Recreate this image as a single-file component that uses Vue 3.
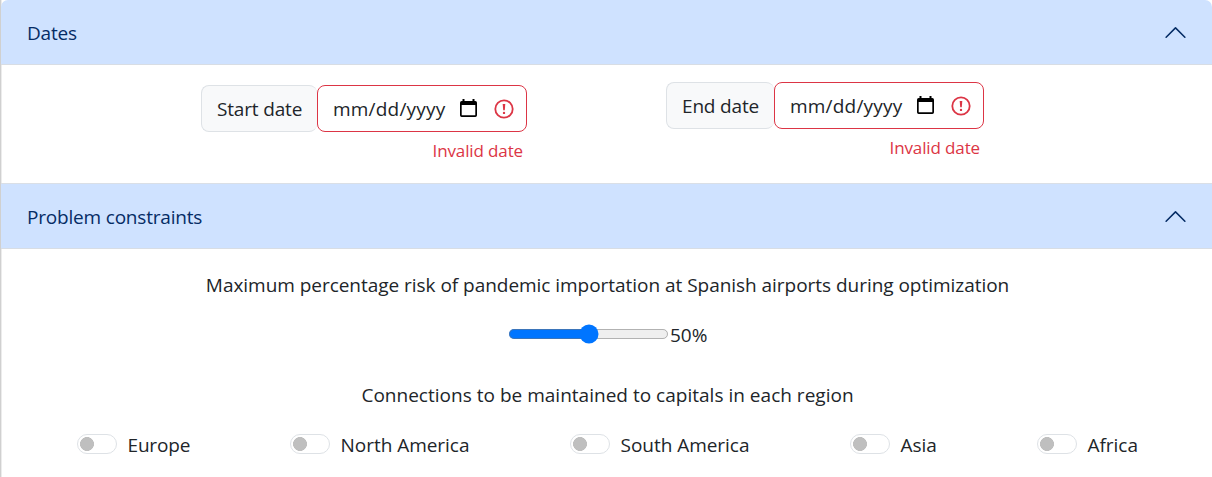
<script setup>
import { ref } from 'vue'

const risk = ref(50)
const dates = [
  { label: 'Start date', key: 'start' },
  { label: 'End date', key: 'end' },
]
const regions = [
  { name: 'Europe', key: 'europe' },
  { name: 'North America', key: 'north' },
  { name: 'South America', key: 'south' },
  { name: 'Asia', key: 'asia' },
  { name: 'Africa', key: 'africa' },
]
</script>

<template>
  <main class="accordion">
    <section>
      <header class="bar first">
        <span class="title-dates">Dates</span>
        <svg class="chevron" viewBox="0 0 16 16"><path d="M1.646 4.646a.5.5 0 0 1 .708 0L8 10.293l5.646-5.647a.5.5 0 0 1 .708.708l-6 6a.5.5 0 0 1-.708 0l-6-6a.5.5 0 0 1 0-.708z" /></svg>
      </header>
      <div class="dates">
        <div v-for="d in dates" :key="d.key" class="field" :class="d.key">
          <div class="group">
            <div class="label"><span>{{ d.label }}</span></div>
            <div class="control">
              <span class="mask">mm/dd/yyyy</span>
              <svg class="calendar" viewBox="0 0 17 19"><path fill-rule="evenodd" d="M2.500 0h2v2h8V0h2v2h.8A1.700 1.700 0 0 1 17 3.700v12.600a1.700 1.700 0 0 1-1.700 1.700H1.700A1.700 1.700 0 0 1 0 16.300V3.700A1.700 1.700 0 0 1 1.700 2h.8zM1.700 6v10.300h13.600V6z" /></svg>
              <svg class="alert" viewBox="0 0 20 20"><circle cx="10" cy="10" r="8.700" /><path d="M8.700 5h2.600l-.5 6.300H9.200z" /><circle class="dot" cx="10" cy="13.900" r="1.200" /></svg>
            </div>
          </div>
          <div class="error"><span>Invalid date</span></div>
        </div>
      </div>
    </section>
    <section>
      <header class="bar">
        <span class="title-problem">Problem constraints</span>
        <svg class="chevron" viewBox="0 0 16 16"><path d="M1.646 4.646a.5.5 0 0 1 .708 0L8 10.293l5.646-5.647a.5.5 0 0 1 .708.708l-6 6a.5.5 0 0 1-.708 0l-6-6a.5.5 0 0 1 0-.708z" /></svg>
      </header>
      <div class="constraints">
        <p class="risk-title">Maximum percentage risk of pandemic importation at Spanish airports during optimization</p>
        <div class="slider">
          <input v-model="risk" type="range" min="0" max="100" />
          <span>{{ risk }}%</span>
        </div>
        <p class="region-title">Connections to be maintained to capitals in each region</p>
        <div class="regions">
          <label v-for="r in regions" :key="r.key" :class="r.key">
            <i class="switch"></i><span>{{ r.name }}</span>
          </label>
        </div>
      </div>
    </section>
  </main>
</template>

<style>
body { background: #fff; overflow: hidden; }
</style>

<style scoped>
* { box-sizing: border-box; }
.accordion {
  height: 477px;
  overflow: hidden;
  border-left: 1px solid #d0d0d0;
  box-shadow: inset 1px 0 #ececec;
  font: 19px/30px "Segoe UI", "Open Sans", "Noto Sans", sans-serif;
  color: #212529;
  white-space: nowrap;
}
.bar {
  height: 66px;
  display: flex;
  align-items: center;
  justify-content: space-between;
  padding: 1px 24px 0 26px;
  background: #cfe2ff;
  border-top: 1px solid #dadfe6;
  border-bottom: 1px solid #d8dde4;
  color: #052c65;
}
.bar.first { height: 65px; border-top: 0; border-radius: 7px 7px 0 0; }
.chevron { width: 25px; height: 25px; fill: #052c65; transform: rotate(180deg); }
.title-dates, .title-problem { letter-spacing: -0.19px; }
.dates { height: 118px; display: flex; padding-left: 200px; }
.field { width: 326px; padding-top: 20px; }
.field.end { width: 318px; margin-left: 139px; padding-top: 17px; }
.group { display: flex; height: 47px; }
.label {
  flex: 1;
  padding: 8px 0 0 15px;
  background: #f8f9fa;
  border: 1px solid #dee2e6;
  border-right: 0;
  border-radius: 8px;
  letter-spacing: -0.17px;
}
.control {
  width: 210px;
  display: flex;
  align-items: center;
  padding: 1px 12px 0 15px;
  border: 1px solid #dc3545;
  border-radius: 8px;
}
.mask { width: 127px; letter-spacing: 0.2px; }
.calendar { width: 17px; height: 19px; margin-top: -2px; }
.alert { width: 20px; height: 20px; margin: -1px 0 0 16.500px; fill: none; stroke: #dc3545; stroke-width: 1.8; }
.alert path, .alert .dot { fill: #dc3545; stroke: none; }
.error { margin-top: 4px; padding-right: 4px; text-align: right; font-size: 17px; letter-spacing: -0.13px; color: #dc3545; }
p { margin: 0; text-align: center; }
.risk-title { padding-left: 2px; letter-spacing: -0.035px; }
.region-title { padding-left: 2px; letter-spacing: 0.015px; }
.constraints { padding-top: 21px; }
.slider { display: flex; align-items: center; height: 30px; margin: 20px 0 30px 504.500px; }
.slider input { zoom: 1.25; width: 128.800px; height: 16px; margin: -1px 0.800px 0 2px; }
.regions { display: flex; margin-top: 20px; padding-left: 76px; }
.regions label { display: flex; align-items: center; width: 213px; }
.regions span { letter-spacing: -0.03px; }
.regions .europe span { letter-spacing: -0.18px; }
.regions .north, .regions .south { width: 280px; }
.regions .asia { width: 187px; }
.regions .africa { width: 110px; }
.switch {
  width: 40px;
  height: 20px;
  margin: -2px 10.500px 0 0;
  border: 1px solid #dee2e6;
  border-radius: 10px;
  background: radial-gradient(circle at 9px 9px, #bfbfbf 6.700px, transparent 7.200px);
}
</style>
